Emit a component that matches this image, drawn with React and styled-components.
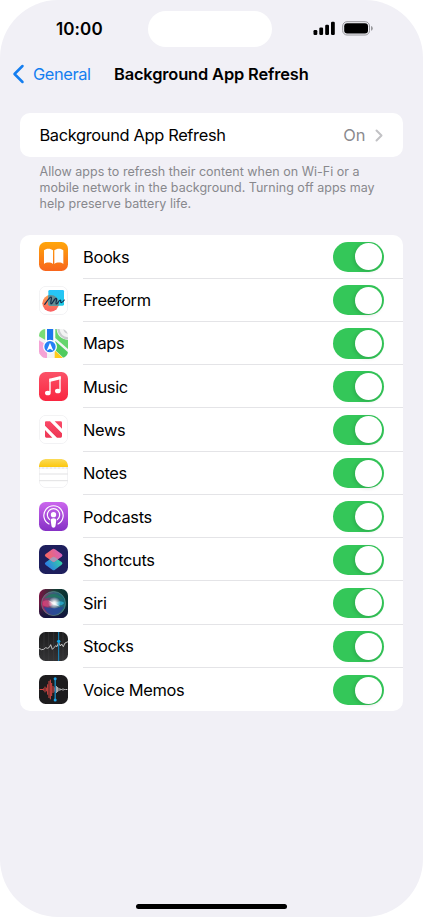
import React from 'react';
import styled, { createGlobalStyle } from 'styled-components';

const GlobalStyle = createGlobalStyle`
  * {
    box-sizing: border-box;
  }

  body {
    margin: 0;
    background: #fff;
    font-family: Inter, 'Liberation Sans', sans-serif;
    color: #000;
  }
`;

const Screen = styled.div`
  display: flex;
  flex-direction: column;
  width: 423px;
  height: 917px;
  overflow: hidden;
  border-radius: 58px;
  background: #f1f0f6;
`;

const StatusBar = styled.header`
  display: grid;
  grid-template-columns: 148px 124px 1fr;
  height: 47px;
  padding-top: 11px;
`;

const Time = styled.div`
  padding-left: 56px;
  font-size: 17px;
  font-weight: 600;
  line-height: 36px;
  letter-spacing: 0.1px;
`;

const Island = styled.div`
  height: 36px;
  border-radius: 18px;
  background: #fff;
`;

const StatusIcons = styled.div`
  display: flex;
  gap: 6px;
  padding: 10px 0 0 41px;
`;

const NavBar = styled.nav`
  display: grid;
  grid-template-columns: 114px 1fr;
  align-items: center;
  height: 54px;
`;

const BackLink = styled.a`
  display: flex;
  align-items: center;
  gap: 8px;
  padding-left: 12px;
  color: #147ef0;
  font-size: 16.4px;
  letter-spacing: -0.4px;
`;

const Title = styled.h1`
  margin: 0;
  font-size: 16.4px;
  font-weight: 600;
  letter-spacing: -0.13px;
  white-space: nowrap;
`;

const Card = styled.section`
  width: 383.5px;
  margin: ${({ $top }) => $top}px 0 0 19.9px;
  border-radius: 10px;
  background: #fff;
`;

const LinkRow = styled.div`
  display: flex;
  align-items: center;
  height: 43.5px;
  padding: 0 20px 0 19.5px;
`;

const Label = styled.span`
  flex: 1;
  font-size: 16.4px;
  letter-spacing: -0.33px;
  white-space: nowrap;
`;

const Value = styled.span`
  margin-right: 10px;
  color: #8a8a8e;
  font-size: 16.4px;
  line-height: 18px;
  padding-bottom: 1px;
`;

const Footnote = styled.p`
  height: 48px;
  margin: 7.5px 0 0 39.5px;
  color: #88888d;
  font-size: 12.5px;
  line-height: 15.7px;
  letter-spacing: 0.02px;
  white-space: nowrap;
`;

const List = styled.ul`
  margin: 0;
  padding: 0;
  list-style: none;
`;

const AppRow = styled.li`
  display: flex;
  gap: 15px;
  height: 43.27px;
  padding-left: 19.1px;
  align-items: center;

  &:last-child > div {
    border-bottom: 0;
  }
`;

const RowBody = styled.div`
  display: flex;
  flex: 1;
  align-items: center;
  height: 100%;
  padding: 1px 19.6px 0 0;
  border-bottom: 1px solid #e4e4e7;
`;

const Switch = styled.div`
  display: flex;
  justify-content: flex-end;
  width: 50.5px;
  height: 30.5px;
  padding: 1.7px;
  border-radius: 16px;
  background: #34c759;
`;

const Knob = styled.div`
  width: 27px;
  height: 27px;
  border-radius: 50%;
  background: #fff;
  box-shadow: -1px 1px 4px rgba(0, 0, 0, 0.16);
`;

const AppIcon = styled.svg`
  display: block;
  flex: none;
  width: 29px;
  height: 29px;
  border-radius: 6.5px;
`;

const HomeIndicator = styled.div`
  width: 151px;
  height: 5px;
  margin: auto auto 8px;
  border-radius: 3px;
  background: #000;
`;

const Gradient = ({ id, from, to }) => (
  <linearGradient id={id} x1="0" y1="0" x2="0" y2="1">
    <stop offset="0" stopColor={from} />
    <stop offset="1" stopColor={to} />
  </linearGradient>
);

const Outline = () => (
  <rect x="1" y="1" width="85" height="85" rx="19" fill="#fff" stroke="#e9e9eb" strokeWidth="2" />
);

const Books = () => (
  <>
    <Gradient id="books" from="#ffa60a" to="#f8651d" />
    <rect width="87" height="87" fill="url(#books)" />
    <path
      d="M42 25v41c-6-5-20-6-27 0V25c6-7 21-6 27 0zM46 25v41c6-5 20-6 27 0V25c-6-7-21-6-27 0z"
      fill="#fff"
    />
  </>
);

const Freeform = () => (
  <>
    <Gradient id="sky" from="#28c4fa" to="#20cbe5" />
    <Gradient id="coral" from="#ff9d4d" to="#fb5d62" />
    <Outline />
    <circle cx="35" cy="52" r="25" fill="url(#coral)" />
    <rect x="28" y="12" width="47" height="47" rx="4" fill="url(#sky)" />
    <path d="M28 28a25 25 0 0 1 31 31H32a4 4 0 0 1-4-4z" fill="#668d92" />
    <path
      d="M17 55C24 46 32 33 36 33s-3 20 0 21c4 1 10-17 15-17s-3 16 1 17c4 0 8-12 12-12 3 0-1 8 3 8 3 0 6-4 9-8"
      fill="none"
      stroke="#102c4c"
      strokeWidth="3.5"
      strokeLinecap="round"
      strokeLinejoin="round"
    />
  </>
);

const Maps = () => (
  <>
    <rect width="87" height="87" fill="#f3f4f4" />
    <path d="M0 0h19v33L0 22z" fill="#79dd76" />
    <path d="M0 34l24 15v38H12L0 73z" fill="#f5a3d5" />
    <path d="M49 0h4c1 18 13 31 34 33v27L49 27z" fill="#65d56d" />
    <path d="M49 36l38 34v17H74L49 64z" fill="#4fcb5e" />
    <path d="M47 64l25 23H47z" fill="#ffcc1b" />
    <path d="M58 0c2 15 13 27 29 28" fill="none" stroke="#c9cccf" strokeWidth="7" />
    <path d="M73 0c1 8 6 13 14 14V0z" fill="#c9cccf" />
    <path d="M24 0h19v48H24z" fill="#1c75ef" />
    <path d="M21.5 0v36M45.500 0v36" stroke="#fff" strokeWidth="4" />
    <circle cx="33" cy="53" r="19" fill="#2580f5" stroke="#fff" strokeWidth="4" />
    <path d="M33 41l10 24-10-6-10 6z" fill="#fff" />
  </>
);

const Music = () => (
  <>
    <Gradient id="music" from="#fb5268" to="#f92640" />
    <rect width="87" height="87" fill="url(#music)" />
    <path d="M31 20l34-8v10l-34 8z" fill="#fff" />
    <path d="M33 20v41M63 14v42" stroke="#fff" strokeWidth="4" />
    <ellipse cx="26.5" cy="63" rx="8.5" ry="7" fill="#fff" />
    <ellipse cx="56.5" cy="57" rx="8.5" ry="7" fill="#fff" />
  </>
);

const News = () => (
  <>
    <Gradient id="news" from="#fa4a68" to="#ee3654" />
    <Outline />
    <path
      d="M21 19h12l36 36v9q0 4-4 4H54L18 32V22q0-3 3-3zM47 19h18q4 0 4 4v18zM18 45l22 23H22q-4 0-4-4z"
      fill="url(#news)"
    />
  </>
);

const Notes = () => (
  <>
    <Gradient id="notes" from="#fbdb58" to="#fcc70e" />
    <Outline />
    <path d="M0 24V19Q1 0 20 0h47q19 0 20 19v5z" fill="url(#notes)" />
    <path d="M1 27h85" stroke="#a9a9a9" strokeWidth="2" strokeDasharray="2 2" />
    <path d="M1 45h85M1 65h85" stroke="#d2d2d4" strokeWidth="2" />
  </>
);

const Podcasts = () => (
  <>
    <Gradient id="podcasts" from="#cb66ed" to="#8530c5" />
    <rect width="87" height="87" fill="url(#podcasts)" />
    <g fill="none" stroke="#fff" strokeWidth="3.5" strokeLinecap="round">
      <path d="M30 66a29 29 0 1 1 27 0" />
      <path d="M32 53a18.500 18.500 0 1 1 23 0" />
    </g>
    <circle cx="43.5" cy="38" r="8" fill="#fff" />
    <path d="M35 54q0-5 8.500-5t8.500 5l-2.500 18q-1 5-6 5t-6-5z" fill="#fff" />
  </>
);

const Shortcuts = () => (
  <>
    <linearGradient id="shortcutTop" x1="0" y1="0.5" x2="1" y2="0.2">
      <stop offset="0" stopColor="#f6675e" />
      <stop offset="1" stopColor="#cf62c5" />
    </linearGradient>
    <linearGradient id="shortcutBottom" x1="0" y1="0.8" x2="1" y2="0.3">
      <stop offset="0" stopColor="#2b6ff0" />
      <stop offset="1" stopColor="#36d6a1" />
    </linearGradient>
    <rect width="87" height="87" fill="#1e1f5d" />
    <path
      d="M20 52l20-14q4-3 8 0l20 13q5 4 0 8L48 74q-4 3-8 0L20 60q-5-4 0-8z"
      fill="url(#shortcutBottom)"
    />
    <path
      d="M20 27l20-14q4-3 8 0l20 14q5 4 0 8L48 49q-4 3-8 0L20 35q-5-4 0-8z"
      fill="url(#shortcutTop)"
    />
    <path d="M31 43l9-6q4-3 8 0l9 6-9 6q-4 3-8 0z" fill="#a698b8" />
  </>
);

const Siri = () => (
  <>
    <linearGradient id="siriBack" x1="0" y1="0.2" x2="1" y2="0.4">
      <stop offset="0" stopColor="#7a1242" />
      <stop offset="0.5" stopColor="#173d35" />
      <stop offset="1" stopColor="#062f33" />
    </linearGradient>
    <linearGradient id="siriShade" x1="0" y1="0" x2="0" y2="1">
      <stop offset="0.5" stopColor="#14123f" stopOpacity="0" />
      <stop offset="1" stopColor="#14123f" />
    </linearGradient>
    <linearGradient id="siriOrb" x1="0" y1="0.6" x2="1" y2="0.4">
      <stop offset="0" stopColor="#b51e5f" />
      <stop offset="0.45" stopColor="#4a5a78" />
      <stop offset="1" stopColor="#0e6c78" />
    </linearGradient>
    <radialGradient id="siriGlow">
      <stop offset="0" stopColor="#fff" />
      <stop offset="0.25" stopColor="#fff" stopOpacity="0.85" />
      <stop offset="1" stopColor="#fff" stopOpacity="0" />
    </radialGradient>
    <rect width="87" height="87" fill="url(#siriBack)" />
    <rect width="87" height="87" fill="url(#siriShade)" />
    <circle cx="43.5" cy="43.5" r="36" fill="url(#siriOrb)" stroke="#5d8f8d" strokeWidth="2" />
    <path d="M14 29q29-29 59 2-26-11-59-2z" fill="#207a60" opacity="0.8" />
    <path d="M14 54q28 6 60-1-12 25-31 25T14 54z" fill="#24489a" opacity="0.85" />
    <path d="M11 38q17-11 33 7-14 14-33 4z" fill="#ed4d7e" opacity="0.6" />
    <path d="M43 45q21-15 33-3-12 15-33 3z" fill="#2ab9dc" opacity="0.7" />
    <ellipse cx="46" cy="42" rx="19" ry="18" fill="url(#siriGlow)" />
    <path d="M27 34l19 7 18 12-20-6z" fill="#fff" opacity="0.6" />
  </>
);

const Stocks = () => (
  <>
    <Gradient id="stocks" from="#1c1c1d" to="#343436" />
    <rect width="87" height="87" fill="url(#stocks)" />
    <path d="M15 0v87M29 0v87M44 0v87M72 0v87" stroke="#424244" strokeWidth="1.5" />
    <path
      d="M0 50h3l4 3 7-1 6-5 6 2 5-3 4-8 5 14 6-6 4-5 4 3 5-13 5 11 4-6 5 8 5-11 9-4"
      fill="none"
      stroke="#dededf"
      strokeWidth="2.5"
    />
    <path d="M59 0v87" stroke="#168dc6" strokeWidth="3" />
    <circle cx="59" cy="28" r="5" fill="#12a5e9" />
  </>
);

const VoiceMemos = () => (
  <>
    <rect width="87" height="87" fill="#1d1c1e" />
    <path
      d="M2 43.500h10M14 40v7M18 35v17M22 38v11M26 28v31M30 18v51M34 14v59M38 24v39M42 33v21M46 37v13"
      stroke="#d84743"
      strokeWidth="3"
    />
    <path
      d="M52 33v21M56 36v15M60 39v9M64 41v5M68 42v3M72 40v7M76 42v3M79 43.500h6"
      stroke="#c5c5c7"
      strokeWidth="3"
    />
    <path d="M48.500 11v64" stroke="#189ad9" strokeWidth="3.5" />
    <circle cx="48.5" cy="11" r="4.5" fill="#20a4e9" />
    <circle cx="48.5" cy="75" r="4.5" fill="#20a4e9" />
  </>
);

const apps = [
  { name: 'Books', Icon: Books },
  { name: 'Freeform', Icon: Freeform },
  { name: 'Maps', Icon: Maps },
  { name: 'Music', Icon: Music },
  { name: 'News', Icon: News },
  { name: 'Notes', Icon: Notes },
  { name: 'Podcasts', Icon: Podcasts },
  { name: 'Shortcuts', Icon: Shortcuts },
  { name: 'Siri', Icon: Siri },
  { name: 'Stocks', Icon: Stocks },
  { name: 'Voice Memos', Icon: VoiceMemos },
];

const Signal = () => (
  <svg width="23" height="15" viewBox="0 0 23 15">
    <rect x="0.5" y="9" width="3.8" height="5" rx="1.2" />
    <rect x="6.3" y="6.5" width="3.8" height="7.5" rx="1.2" />
    <rect x="12.2" y="3.7" width="3.8" height="10.3" rx="1.2" />
    <rect x="18" y="0.8" width="3.8" height="13.2" rx="1.2" />
  </svg>
);

const Battery = () => (
  <svg width="32" height="15" viewBox="0 0 32 15">
    <rect x="0.7" y="0.7" width="26.8" height="13.3" rx="4.3" fill="none" stroke="#98989c" />
    <rect x="2.2" y="2.2" width="23.8" height="10.3" rx="3" />
    <path d="M29 5q1.800.5 1.800 2.400T29 9.700z" fill="#98989c" />
  </svg>
);

const App = () => {
  return (
    <>
      <GlobalStyle />
      <Screen>
        <StatusBar>
          <Time>10:00</Time>
          <Island />
          <StatusIcons>
            <Signal />
            <Battery />
          </StatusIcons>
        </StatusBar>
        <NavBar>
          <BackLink>
            <svg width="13" height="20" viewBox="0 0 13 20" fill="none" stroke="#147ef0">
              <path d="M10.500 2L2.500 10l8 8" strokeWidth="2.5" strokeLinecap="round" strokeLinejoin="round" />
            </svg>
            General
          </BackLink>
          <Title>Background App Refresh</Title>
        </NavBar>
        <Card $top={12.4}>
          <LinkRow>
            <Label>Background App Refresh</Label>
            <Value>On</Value>
            <svg width="8" height="13" viewBox="0 0 8 13" fill="none" stroke="#c2c2c5">
              <path d="M1.500 1.500l5 5-5 5" strokeWidth="2" strokeLinecap="round" strokeLinejoin="round" />
            </svg>
          </LinkRow>
        </Card>
        <Footnote>
          Allow apps to refresh their content when on Wi-Fi or a
          <br />
          mobile network in the background. Turning off apps may
          <br />
          help preserve battery life.
        </Footnote>
        <Card $top={22.9}>
          <List>
            {apps.map(({ name, Icon }) => (
              <AppRow key={name}>
                <AppIcon viewBox="0 0 87 87">
                  <Icon />
                </AppIcon>
                <RowBody>
                  <Label>{name}</Label>
                  <Switch>
                    <Knob />
                  </Switch>
                </RowBody>
              </AppRow>
            ))}
          </List>
        </Card>
        <HomeIndicator />
      </Screen>
    </>
  );
};

export default App;
